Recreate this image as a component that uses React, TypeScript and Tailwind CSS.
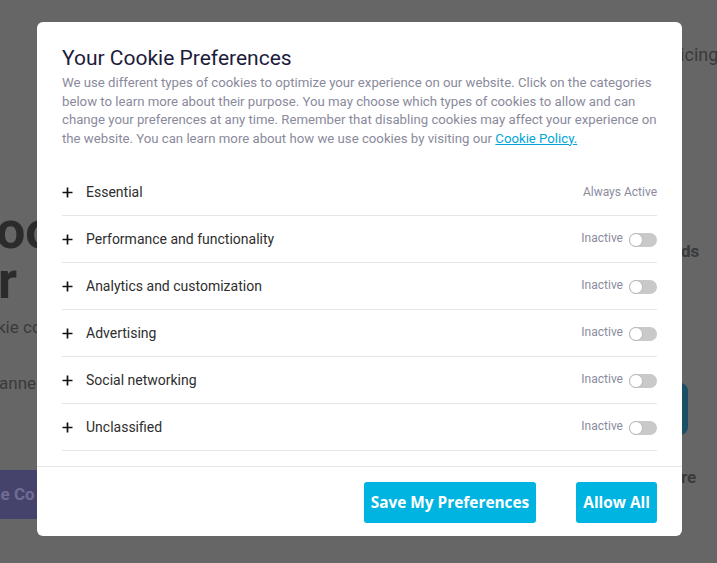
import React from 'react';

const categories = [
  'Performance and functionality',
  'Analytics and customization',
  'Advertising',
  'Social networking',
  'Unclassified',
];

const PlusIcon = () => (
  <svg width="11" height="11" viewBox="0 0 11 11" className="shrink-0">
    <path d="M5.5 0.5v10M0.5 5.5h10" stroke="#111" strokeWidth="1.7" />
  </svg>
);

const Toggle = () => (
  <div className="relative h-[14px] w-[28px] rounded-full bg-[#c9c9c9]">
    <div className="absolute left-0 top-0 h-[14px] w-[14px] rounded-full border border-[#b8b8b8] bg-white" />
  </div>
);

const Row = ({ label, right }: { label: string; right: React.ReactNode }) => (
  <div className="flex h-[47px] items-center justify-between border-b border-[#e6e6e6] pt-[1px]">
    <div className="flex items-center gap-[13px]">
      <PlusIcon />
      <span className="text-[14px] text-[#2e2e2e]">{label}</span>
    </div>
    <div className="-mt-[4px]">{right}</div>
  </div>
);

const App = () => {
  return (
    <div
      className="relative h-[563px] w-[717px] overflow-hidden bg-[#666666]"
      style={{ fontFamily: 'Roboto, "Liberation Sans", sans-serif' }}
    >
      {/* dimmed page behind the dialog */}
      <div className="flex h-full justify-between">
        <div className="flex w-[200px] flex-col pt-[206px] text-[#2b2b2b]">
          <div className="-ml-[4px] whitespace-nowrap text-[52px] font-bold leading-[50px]">oo</div>
          <div className="-ml-[2px] whitespace-nowrap text-[52px] font-bold leading-[50px]">r</div>
          <div className="-ml-[3px] mt-[11px] whitespace-nowrap text-[17px] leading-[20px] text-[#3a3a3a]">kie co</div>
          <div className="-ml-[1px] mt-[36px] whitespace-nowrap text-[17px] leading-[20px] text-[#3a3a3a]">anne</div>
          <div className="mt-[77px] flex h-[49px] w-[90px] items-center bg-[#45436c]">
            <span className="-ml-[4px] whitespace-nowrap text-[17px] font-bold text-[#6f6d94]">le Co</span>
          </div>
        </div>
        <div className="flex w-[60px] flex-col pt-[44px] text-[#3a3a3a]">
          <div className="whitespace-nowrap pl-[17px] text-[18px] leading-[22px]">ricing</div>
          <div className="mt-[174px] whitespace-nowrap pl-[24px] text-[17px] font-bold leading-[22px]">ds</div>
          <div className="-ml-[20px] mt-[121px] h-[52px] w-[51px] rounded-[8px] bg-[#1b4f66]" />
          <div className="mt-[31px] whitespace-nowrap pl-[24px] text-[17px] font-bold leading-[22px]">re</div>
        </div>
      </div>

      {/* dialog */}
      <div className="absolute left-[37px] top-[22px] flex h-[514px] w-[645px] flex-col rounded-[6px] bg-white">
        <div className="px-[25px] pt-[24px]">
          <h2 className="text-[21px] leading-[25px] text-[#1c1c3a]">Your Cookie Preferences</h2>
          <p className="mt-[3px] text-[13.2px] leading-[18.5px] text-[#8a8a9c]">
            We use different types of cookies to optimize your experience on our website. Click on the categories
            below to learn more about their purpose. You may choose which types of cookies to allow and can
            change your preferences at any time. Remember that disabling cookies may affect your experience
            on the website. You can learn more about how we use cookies by visiting our{' '}
            <a className="text-[#00a6d8] underline">Cookie Policy.</a>
          </p>
          <div className="mt-[21px]">
            <Row
              label="Essential"
              right={<span className="text-[12px] text-[#8b8b9e]">Always Active</span>}
            />
            {categories.map((c) => (
              <Row
                key={c}
                label={c}
                right={
                  <div className="flex items-center gap-[6px]">
                    <span className="text-[12px] text-[#8b8b9e]">Inactive</span>
                    <div className="mt-[4px]">
                      <Toggle />
                    </div>
                  </div>
                }
              />
            ))}
          </div>
        </div>
        <div className="mt-[15px] flex justify-end gap-[40px] border-t border-[#e6e6e6] px-[25px] pt-[15px]">
          <button
            className="h-[41px] rounded-[3px] bg-[#00b4e1] px-[7px] text-[15.4px] font-bold text-white"
            style={{ fontFamily: '"Open Sans", "Liberation Sans", sans-serif' }}
          >
            Save My Preferences
          </button>
          <button
            className="h-[41px] rounded-[3px] bg-[#00b4e1] px-[7px] text-[15.4px] font-bold text-white"
            style={{ fontFamily: '"Open Sans", "Liberation Sans", sans-serif' }}
          >
            Allow All
          </button>
        </div>
      </div>
    </div>
  );
};

export default App;
